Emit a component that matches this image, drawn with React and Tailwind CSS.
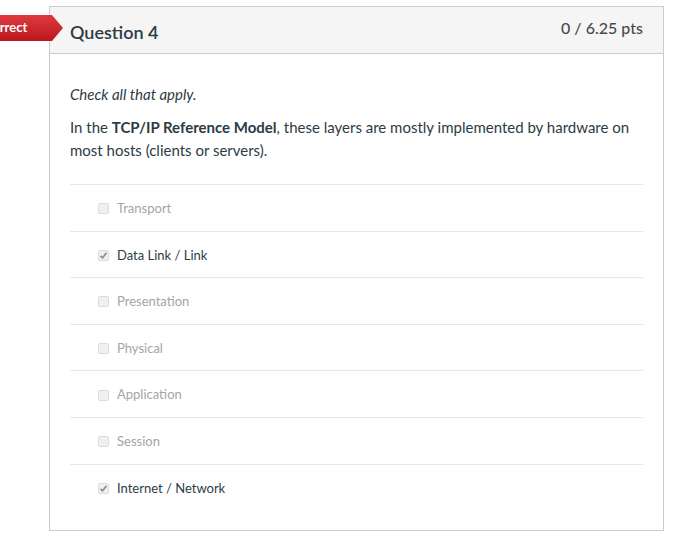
import React from "react";

const options = [
  { label: "Transport", checked: false },
  { label: "Data Link / Link", checked: true },
  { label: "Presentation", checked: false },
  { label: "Physical", checked: false },
  { label: "Application", checked: false },
  { label: "Session", checked: false },
  { label: "Internet / Network", checked: true },
];

function Box({ checked }) {
  return (
    <span className="flex h-[11px] w-[11px] items-center justify-center rounded-[2px] border border-[#dcdcdc] bg-[#f0f0f0]">
      {checked && (
        <svg width="9" height="9" viewBox="0 0 9 9">
          <path d="M1.5 4.8 L3.6 6.8 L7.5 1.8" fill="none" stroke="#8a8a8a" strokeWidth="1.6" />
        </svg>
      )}
    </span>
  );
}

export default function App() {
  return (
    <div className="relative h-[551px] w-[700px] overflow-hidden bg-white font-['Lato',sans-serif]">
      <div className="ml-[49px] mt-[6px] w-[615px] border border-[#c7cdd1] bg-white">
        <div className="flex h-[47px] items-start justify-between border-b border-[#c7cdd1] bg-[#f5f5f5] pl-[20px] pr-[20px]">
          <div className="pt-[13px] text-[18px] font-semibold leading-[24px] text-[#2d3b45]">Question 4</div>
          <div className="pt-[9px] text-[16px] font-medium leading-[24px] text-[#4a4a4a]">0 / 6.25 pts</div>
        </div>
        <div className="px-[20px] pb-[20px] pt-[30px]">
          <p className="text-[15px] italic leading-[20px] text-[#2d3b45]">Check all that apply.</p>
          <p className="mt-[12px] text-[15px] leading-[23px] text-[#2d3b45]">
            In the <b className="font-bold">TCP/IP Reference Model</b>, these layers are mostly implemented by hardware on most hosts (clients or servers).
          </p>
          <div className="mt-[22px]">
            {options.map((o) => (
              <div key={o.label} className="flex h-[46.6px] items-center gap-[8px] border-t border-[#e8e8e8] pl-[28px] pt-[2px]">
                <Box checked={o.checked} />
                <span className={"text-[13px] " + (o.checked ? "text-[#2d3b45]" : "text-[#a5a5a5]")}>{o.label}</span>
              </div>
            ))}
          </div>
        </div>
      </div>
      <div className="absolute left-0 top-[15px] flex h-[26px] w-[63px] items-center bg-gradient-to-b from-[#e0393f] to-[#b8181d] [clip-path:polygon(0_0,52px_0,63px_50%,52px_100%,0_100%)]">
        <span className="ml-[-25px] text-[13px] font-bold text-white">Incorrect</span>
      </div>
    </div>
  );
}
